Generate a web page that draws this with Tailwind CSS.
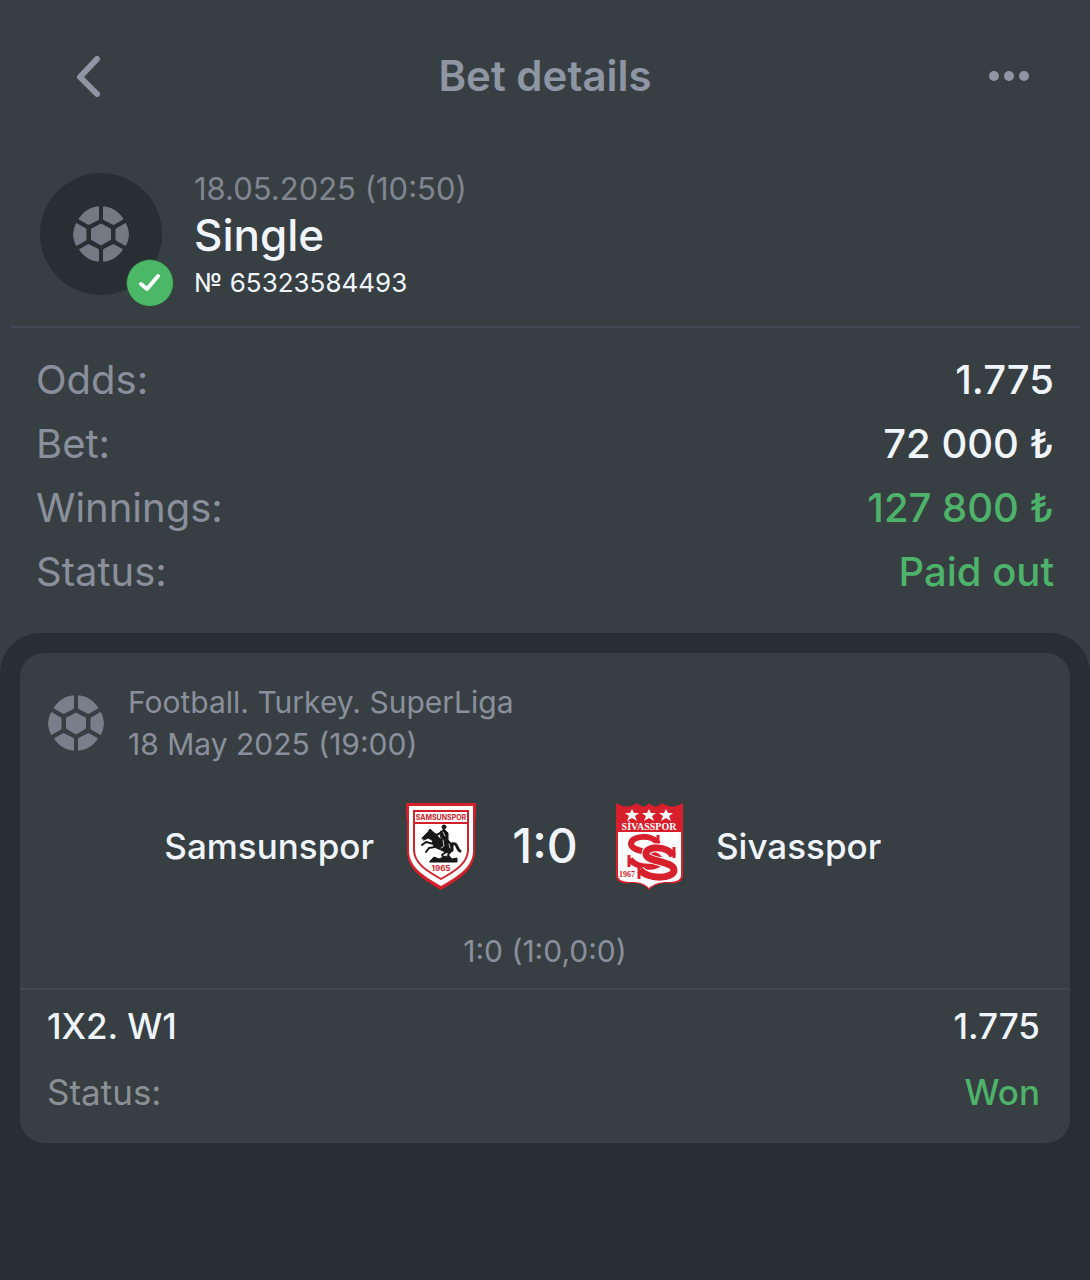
<!DOCTYPE html>
<html lang="en">
<head>
    <meta charset="UTF-8">
    <meta name="viewport" content="width=device-width, initial-scale=1.0">
    <title>Bet details</title>

    <!-- Tailwind CSS -->
    <script src="https://cdn.jsdelivr.net/npm/@tailwindcss/browser@4"></script>

    <style>
        body {
            font-family: Inter, 'Liberation Sans', sans-serif;
        }
    </style>
</head>
<body class="min-h-screen flex flex-col bg-[#383f43] text-[#f0f5fc]">

    <!-- Ball icon, shared by the bet summary and the match card -->
    <svg class="hidden" xmlns="http://www.w3.org/2000/svg">
        <symbol id="ball" viewBox="0 0 56 56">
            <g fill="currentColor" stroke="currentColor" stroke-width="1" stroke-linejoin="round">
                <path d="M28 18 L37.500 23 V33.500 L28 39 L18.500 33.500 V23 Z" />
                <path d="M25.500 .8 V13.500 L15.500 18.500 L6 13 C10.500 6 17 1.500 25.500 .8 Z" />
                <path d="M30.500 .8 V13.500 L40.500 18.500 L50 13 C45.500 6 39 1.500 30.500 .8 Z" />
                <path d="M3.500 17.500 L13 23 V34 L3.500 39.500 C-.3 32 -.3 25 3.500 17.500 Z" />
                <path d="M52.500 17.500 L43 23 V34 L52.500 39.500 C56.300 32 56.300 25 52.500 17.500 Z" />
                <path d="M25.500 55.200 V43.500 L15.500 38.500 L6.500 43.500 C11 50.500 17.500 54.500 25.500 55.200 Z" />
                <path d="M30.500 55.200 V43.500 L40.500 38.500 L49.500 43.500 C45 50.500 38.500 54.500 30.500 55.200 Z" />
            </g>
        </symbol>
    </svg>

    <!-- Header -->
    <header class="flex justify-between items-center pt-10 px-14 text-[#8e95a3]">
        <button type="button" aria-label="Back" class="w-16 h-18 flex items-center justify-center">
            <svg class="w-7 h-11" viewBox="0 0 28 44" fill="none" stroke="currentColor" stroke-width="6" stroke-linecap="round" stroke-linejoin="round">
                <path d="M23 5 L6 23 L23 40" />
            </svg>
        </button>
        <h1 class="text-[42px] leading-none font-semibold">Bet details</h1>
        <button type="button" aria-label="More" class="w-16 h-18 flex items-center justify-end">
            <svg class="w-12 h-3" viewBox="0 0 48 12" fill="currentColor">
                <circle cx="8" cy="6" r="5" />
                <circle cx="23" cy="6" r="5" />
                <circle cx="38" cy="6" r="5" />
            </svg>
        </button>
    </header>

    <!-- Bet summary -->
    <section class="flex gap-8 mx-[10px] mt-[61px] pl-[30px] pb-[31px] border-b-2 border-[#414853]">
        <div class="relative w-[122px] h-[122px] rounded-full bg-[#282f33] flex items-center justify-center text-[#737a84]">
            <svg class="w-14 h-14"><use href="#ball" /></svg>
            <span class="absolute -right-3 -bottom-3 w-12 h-12 rounded-full bg-[#4ab866] border border-[#2f4a3c] flex items-center justify-center">
                <svg class="w-6 h-6" viewBox="0 0 24 24" fill="none" stroke="#ffffff" stroke-width="4" stroke-linecap="round" stroke-linejoin="round">
                    <path d="M3 13 L9 18 L20 5" />
                </svg>
            </span>
        </div>
        <div class="h-[122px]">
            <p class="text-[31px] leading-8 text-[#80868f]">18.05.2025 (10:50)</p>
            <h2 class="text-[44px] leading-15 font-medium">Single</h2>
            <p class="text-[26px] leading-9">№ 65323584493</p>
        </div>
    </section>

    <!-- Totals -->
    <dl class="px-9 pt-5 pb-[29px] text-[40px] leading-16">
        <div class="flex justify-between">
            <dt class="text-[#8a909b]">Odds:</dt>
            <dd class="font-medium">1.775</dd>
        </div>
        <div class="flex justify-between">
            <dt class="text-[#8a909b]">Bet:</dt>
            <dd class="font-medium">72 000 ₺</dd>
        </div>
        <div class="flex justify-between">
            <dt class="text-[#8a909b]">Winnings:</dt>
            <dd class="font-medium text-[#4db36a]">127 800 ₺</dd>
        </div>
        <div class="flex justify-between">
            <dt class="text-[#8a909b]">Status:</dt>
            <dd class="font-medium text-[#4db36a]">Paid out</dd>
        </div>
    </dl>

    <!-- Events -->
    <main class="grow bg-[#282f32] rounded-t-[40px] p-5">
        <article class="bg-[#383f43] rounded-3xl pt-7 pb-[18px]">
            <div class="flex items-center gap-6 px-7 text-[#8a909b]">
                <svg class="w-14 h-14 text-[#787e8a]"><use href="#ball" /></svg>
                <div class="text-[30px] leading-[42px]">
                    <p>Football. Turkey. SuperLiga</p>
                    <p>18 May 2025 (19:00)</p>
                </div>
            </div>

            <!-- Teams and score -->
            <div class="grid grid-cols-[1fr_138px_1fr] items-center mt-[37px] text-[35px] font-medium">
                <div class="flex items-center justify-end gap-8">
                    <span>Samsunspor</span>
                    <svg class="w-[70px] h-[88px]" viewBox="0 0 70 88" role="img" aria-label="Samsunspor crest">
                        <path d="M0 1 H70 C70 8 70 14 69 22 V50 C68 68 55 76 35 88 C15 76 2 68 1 50 V22 C0 14 0 8 0 1 Z" fill="#d4202b" />
                        <path d="M3 4 H67 V50 C66 65 54 73 35 84 C16 73 4 65 3 50 Z" fill="#ffffff" />
                        <path d="M8 9 H62 V49 C61 61 51 68 35 77 C19 68 9 61 8 49 Z" fill="#ffffff" stroke="#d4202b" stroke-width="2" />
                        <path d="M8 21 H62" stroke="#d4202b" stroke-width="2" />
                        <text x="35" y="18" text-anchor="middle" font-size="7" font-weight="700" fill="#c9222c">SAMSUNSPOR</text>
                        <!-- rider on a rearing horse -->
                        <g fill="#171717" stroke="#171717" stroke-linecap="round" stroke-linejoin="round">
                            <path d="M16 36 L22 30 L24 27 L26 29 L31 33 L34 37 L42 38 L47 43 L47 49 L41 51 L35 48 L28 45 L26 38 L22 36 L18 38 Z" stroke-width="1" />
                            <path d="M34 30 L38 27 L42 31 L42 39 L36 39 Z" stroke-width="1" />
                            <circle cx="38" cy="25" r="2" />
                            <path d="M35 31 L30 33 M28 42 L20 40 L16 43 M29 45 L23 46 L20 50 M40 50 L36 53 L39 57 M46 48 L42 53 L45 57" fill="none" stroke-width="2" />
                            <path d="M46 42 C52 40 50 47 54 49" fill="none" stroke-width="3" />
                            <path d="M24 59 L28 55 L33 57 L40 54 L46 57 L51 56 V60 H24 Z" stroke-width="1" />
                            <path d="M37 38 L38 44 L35 46 M37 30 L39 34 M43 42 L44 46" fill="none" stroke="#c8c8c8" stroke-width="1" />
                        </g>
                        <text x="35" y="69" text-anchor="middle" font-size="8" font-weight="700" fill="#c9222c">1965</text>
                    </svg>
                </div>
                <span class="text-center text-[48px]">1:0</span>
                <div class="flex items-center gap-8">
                    <svg class="w-[70px] h-[88px]" viewBox="0 0 70 88" role="img" aria-label="Sivasspor crest">
                        <path d="M2 1 C10 6 17 5 23 1 C28 6 32 5 35 1 C39 5 43 6 48 1 C54 5 61 6 69 1 V73 C69 81 62 82 53 81 C45 81 40 83 35 88 C31 83 26 81 18 81 C9 82 2 81 2 73 Z" fill="#d81f2c" />
                        <path d="M4 30 H67 V73 C67 79 61 80 53 80 C45 80 40 82 35 86 C31 82 26 80 18 80 C10 80 4 79 4 73 V30 Z" fill="#ffffff" />
                        <g fill="#ffffff">
                            <path id="star" d="M18 7 L20 11 L25 11 L21 14 L23 19 L18 16 L13 19 L15 14 L11 11 L16 11 Z" />
                            <use href="#star" x="17" />
                            <use href="#star" x="34" />
                        </g>
                        <text x="35" y="28" text-anchor="middle" font-family="Liberation Serif" font-size="10" font-weight="700" fill="#ffffff">SİVASSPOR</text>
                        <!-- interlaced monogram -->
                        <g fill="none" stroke="#d81f2c">
                            <path d="M44 42 C39 32 17 33 17 42 C17 51 46 49 46 59 C46 67 23 67 16 57" stroke-width="6" />
                            <path d="M44 33 V44 M15 53 V65" stroke-width="3" />
                            <path d="M59 54 C54 44 32 43 32 52 C32 60 60 59 60 68 C60 77 35 78 26 68" stroke="#ffffff" stroke-width="9" />
                            <path d="M59 54 C54 44 32 43 32 52 C32 60 60 59 60 68 C60 77 35 78 26 68" stroke-width="7" />
                            <path d="M60 45 V56 M25 64 V77" stroke-width="3" />
                        </g>
                        <text x="5" y="75" font-family="Liberation Serif" font-size="8" font-weight="700" fill="#c9222c">1967</text>
                    </svg>
                    <span>Sivasspor</span>
                </div>
            </div>

            <p class="mt-10 pb-4 text-center text-[30px] leading-[42px] text-[#8a909b]">1:0 (1:0,0:0)</p>

            <!-- Selection -->
            <dl class="border-t-2 border-[#414853] pl-[27px] pr-[30px] pt-[3px] text-[35px] leading-[66px]">
                <div class="flex justify-between font-medium">
                    <dt>1X2. W1</dt>
                    <dd>1.775</dd>
                </div>
                <div class="flex justify-between">
                    <dt class="text-[#8a9094]">Status:</dt>
                    <dd class="font-medium text-[#4db36a]">Won</dd>
                </div>
            </dl>
        </article>
    </main>

</body>
</html>
